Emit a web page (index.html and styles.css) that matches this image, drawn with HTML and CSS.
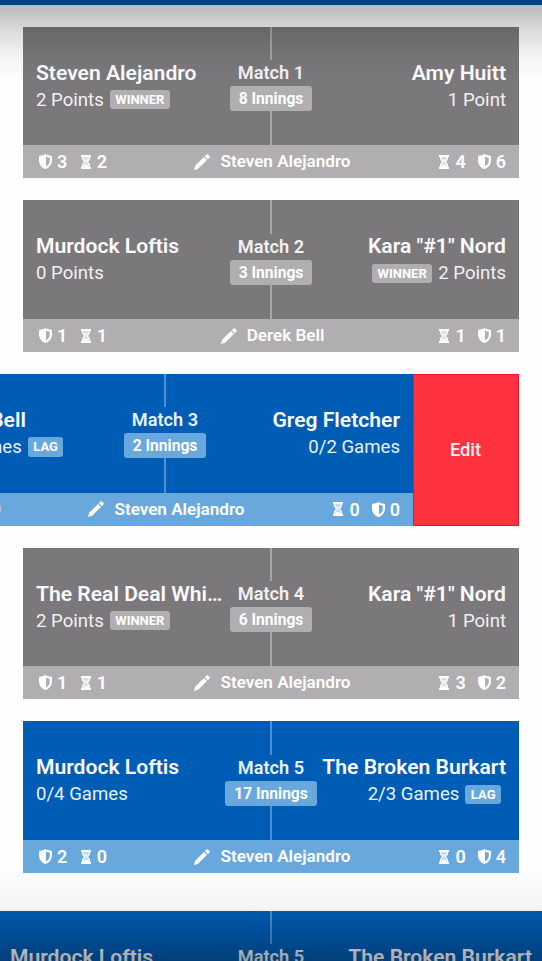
FILE: index.html
```html
<!DOCTYPE html>
<html lang="en">
<head>
<meta charset="utf-8">
<title>Matches</title>
<link rel="stylesheet" href="styles.css">
</head>
<body>
<svg class="sprite" aria-hidden="true">
  <symbol id="shield" viewBox="0 0 13 15"><path fill-rule="evenodd" d="M6.5 0C8.4 1.1 10.3 1.6 12.3 1.8Q13 2 13 2.8V6.2C13 10.6 10.4 13.5 6.5 15C2.6 13.5 0 10.6 0 6.2V2.8Q0 2 .7 1.8C2.7 1.6 4.6 1.1 6.5 0ZM7 2.4V12.3C9.5 11.1 10.8 9 10.8 6.2V3.7C9.4 3.4 8.1 3 7 2.4Z"/></symbol>
  <symbol id="hourglass" viewBox="0 0 10 14"><path d="M0 0H10V2.2H0ZM0 11.8H10V14H0Z"/><path fill-opacity=".5" d="M1 2H9C9 4.5 8.3 5.8 6.8 7C8.3 8.2 9 9.5 9 12H1C1 9.5 1.7 8.2 3.2 7C1.7 5.8 1 4.5 1 2Z"/><path fill="none" stroke="currentColor" stroke-width="1.3" d="M1.5 2C1.5 4.5 2.3 6 3.8 7C2.3 8 1.5 9.5 1.5 12M8.5 2C8.5 4.5 7.7 6 6.2 7C7.7 8 8.5 9.5 8.5 12"/><path d="M2.8 4.6H7.2L5 6.6ZM2.5 11.8C2.7 10.2 3.8 9.6 5 9.6S7.3 10.2 7.5 11.8Z"/></symbol>
  <symbol id="pencil" viewBox="0 0 16 16"><path d="M0 16L1.1 11.8L10 3L13 6L4.1 14.8ZM10.8 2.2L12.5.5Q13.2-.1 13.9.5L15.5 2.1Q16.1 2.8 15.5 3.5L13.8 5.2Z"/></symbol>
</svg>
<div class="screen">
  <header class="topbar"></header>
  <main class="matches">
    <article class="card done">
      <div class="body">
        <div class="player"><h2>Steven Alejandro</h2><p>2 Points <b class="tag">WINNER</b></p></div>
        <div class="center"><i class="rule"></i><h3>Match 1</h3><span class="innings">8 Innings</span><i class="rule"></i></div>
        <div class="player away"><h2>Amy Huitt</h2><p>1 Point</p></div>
      </div>
      <footer><div class="stats"><svg class="shield"><use href="#shield"/></svg><span>3</span><svg class="glass"><use href="#hourglass"/></svg><span>2</span></div><div class="scorer"><svg class="pencil"><use href="#pencil"/></svg>Steven Alejandro</div><div class="stats right"><svg class="glass"><use href="#hourglass"/></svg><span>4</span><svg class="shield"><use href="#shield"/></svg><span>6</span></div></footer>
    </article>
    <article class="card done">
      <div class="body">
        <div class="player"><h2>Murdock Loftis</h2><p>0 Points</p></div>
        <div class="center"><i class="rule"></i><h3>Match 2</h3><span class="innings">3 Innings</span><i class="rule"></i></div>
        <div class="player away"><h2>Kara "#1" Nord</h2><p><b class="tag">WINNER</b> 2 Points</p></div>
      </div>
      <footer><div class="stats"><svg class="shield"><use href="#shield"/></svg><span>1</span><svg class="glass"><use href="#hourglass"/></svg><span>1</span></div><div class="scorer"><svg class="pencil"><use href="#pencil"/></svg>Derek Bell</div><div class="stats right"><svg class="glass"><use href="#hourglass"/></svg><span>1</span><svg class="shield"><use href="#shield"/></svg><span>1</span></div></footer>
    </article>
    <div class="swipe">
      <article class="card">
        <div class="body">
          <div class="player"><h2>Derek Bell</h2><p>0/2 Games <b class="tag">LAG</b></p></div>
          <div class="center"><i class="rule"></i><h3>Match 3</h3><span class="innings">2 Innings</span><i class="rule"></i></div>
          <div class="player away"><h2>Greg Fletcher</h2><p>0/2 Games</p></div>
        </div>
        <footer><div class="stats"><svg class="shield"><use href="#shield"/></svg><span>0</span><svg class="glass"><use href="#hourglass"/></svg><span>0</span></div><div class="scorer"><svg class="pencil"><use href="#pencil"/></svg>Steven Alejandro</div><div class="stats right"><svg class="glass"><use href="#hourglass"/></svg><span>0</span><svg class="shield"><use href="#shield"/></svg><span>0</span></div></footer>
      </article>
      <button class="edit">Edit</button>
    </div>
    <article class="card done">
      <div class="body">
        <div class="player"><h2>The Real Deal Whi…</h2><p>2 Points <b class="tag">WINNER</b></p></div>
        <div class="center"><i class="rule"></i><h3>Match 4</h3><span class="innings">6 Innings</span><i class="rule"></i></div>
        <div class="player away"><h2>Kara "#1" Nord</h2><p>1 Point</p></div>
      </div>
      <footer><div class="stats"><svg class="shield"><use href="#shield"/></svg><span>1</span><svg class="glass"><use href="#hourglass"/></svg><span>1</span></div><div class="scorer"><svg class="pencil"><use href="#pencil"/></svg>Steven Alejandro</div><div class="stats right"><svg class="glass"><use href="#hourglass"/></svg><span>3</span><svg class="shield"><use href="#shield"/></svg><span>2</span></div></footer>
    </article>
    <article class="card">
      <div class="body">
        <div class="player"><h2>Murdock Loftis</h2><p>0/4 Games</p></div>
        <div class="center"><i class="rule"></i><h3>Match 5</h3><span class="innings">17 Innings</span><i class="rule"></i></div>
        <div class="player away"><h2>The Broken Burkart</h2><p>2/3 Games <b class="tag last">LAG</b></p></div>
      </div>
      <footer><div class="stats"><svg class="shield"><use href="#shield"/></svg><span>2</span><svg class="glass"><use href="#hourglass"/></svg><span>0</span></div><div class="scorer"><svg class="pencil"><use href="#pencil"/></svg>Steven Alejandro</div><div class="stats right"><svg class="glass"><use href="#hourglass"/></svg><span>0</span><svg class="shield"><use href="#shield"/></svg><span>4</span></div></footer>
    </article>
  </main>
  <section class="card current">
    <div class="body">
      <div class="player"><h2>Murdock Loftis</h2></div>
      <div class="center"><i class="rule"></i><h3>Match 5</h3></div>
      <div class="player away"><h2>The Broken Burkart</h2></div>
    </div>
  </section>
  <div class="shade top"></div>
  <div class="shade bottom"></div>
</div>
</body>
</html>
```
FILE: styles.css
```css
* { box-sizing: border-box; }
body, h2, h3, p { margin: 0; }
body { background: #fefefe; font-family: Roboto, sans-serif; color: #fff; overflow: hidden; }
.sprite { position: absolute; width: 0; height: 0; }
svg { display: block; fill: currentColor; flex: none; }
.screen { position: relative; width: 542px; height: 961px; overflow: hidden; }
.topbar { height: 5px; background: #00427f; }
.matches { display: flex; flex-direction: column; gap: 21.9px; padding: 21.6px 23px 0; }
.card { width: 496px; height: 151.8px; flex: none; background: #005db5; --light: #69a8dc; --text: #e6f2ff; --line: #4a90d3; }
.done { background: #7b787b; --light: #b0aeb1; --text: #f2f0f3; --line: #a8a6a9; }
.body { display: grid; grid-template-columns: 1fr 98px 1fr; height: 118.8px; padding: 0 13px; }
.player { min-width: 0; padding-top: 33px; white-space: nowrap; color: var(--text); }
.away { text-align: right; }
h2 { font-size: 21.1px; line-height: 26px; font-weight: 600; color: #fafaff; }
p { display: flex; align-items: center; gap: 6px; font-size: 18.6px; line-height: 28px; }
.away p { justify-content: flex-end; }
.tag { height: 19.5px; padding: 0 5.5px; border-radius: 3px; background: var(--light); color: #fff; font-size: 13px; line-height: 20px; font-weight: 700; }
.last { margin-right: 5px; }
.center { display: flex; flex-direction: column; align-items: center; color: var(--text); }
.rule { width: 1.5px; height: 33.5px; background: var(--line); flex: none; }
.rule:last-child { flex: 1; }
h3 { font-size: 18.2px; line-height: 25px; margin-bottom: 1px; font-weight: 600; white-space: nowrap; }
.innings { height: 25px; padding: 0 9px; border-radius: 3px; background: var(--light); color: #fff; font-size: 15.6px; line-height: 26px; font-weight: 700; white-space: nowrap; }
footer { display: grid; grid-template-columns: 1fr auto 1fr; align-items: center; height: 33px; padding: 0 13px 0 16px; background: var(--light); font-size: 17.1px; font-weight: 600; line-height: 33px; }
.stats { display: flex; align-items: center; font-size: 18px; }
.stats.right { justify-content: flex-end; }
.shield { width: 13px; height: 15px; margin-right: 5px; }
.glass { width: 10px; height: 14px; margin-right: 6px; }
.stats span + svg { margin-left: 12px; }
.stats span + .glass { margin-left: 13.5px; }
.scorer { display: flex; align-items: center; gap: 10px; }
.pencil { width: 16px; height: 16px; }
.swipe { display: flex; margin-left: -106px; }
.edit { width: 106px; border: 1px solid #f91425; background: #ff3340; color: #fff0f0; font: 500 18.3px Roboto, sans-serif; padding: 0 1px 0 0; }
.current { width: 548px; margin: 37.6px 0 0 -3px; }
.shade { position: absolute; left: 0; width: 100%; pointer-events: none; }
.top { top: 5px; height: 75px; background: linear-gradient(rgba(0,0,0,.27), rgba(0,0,0,.14) 33%, rgba(0,0,0,.04) 70%, transparent); }
.bottom { bottom: 0; height: 90px; background: linear-gradient(transparent, rgba(0,0,0,.04) 40%, rgba(0,0,0,.16) 68%, rgba(0,0,0,.33)); }
```
